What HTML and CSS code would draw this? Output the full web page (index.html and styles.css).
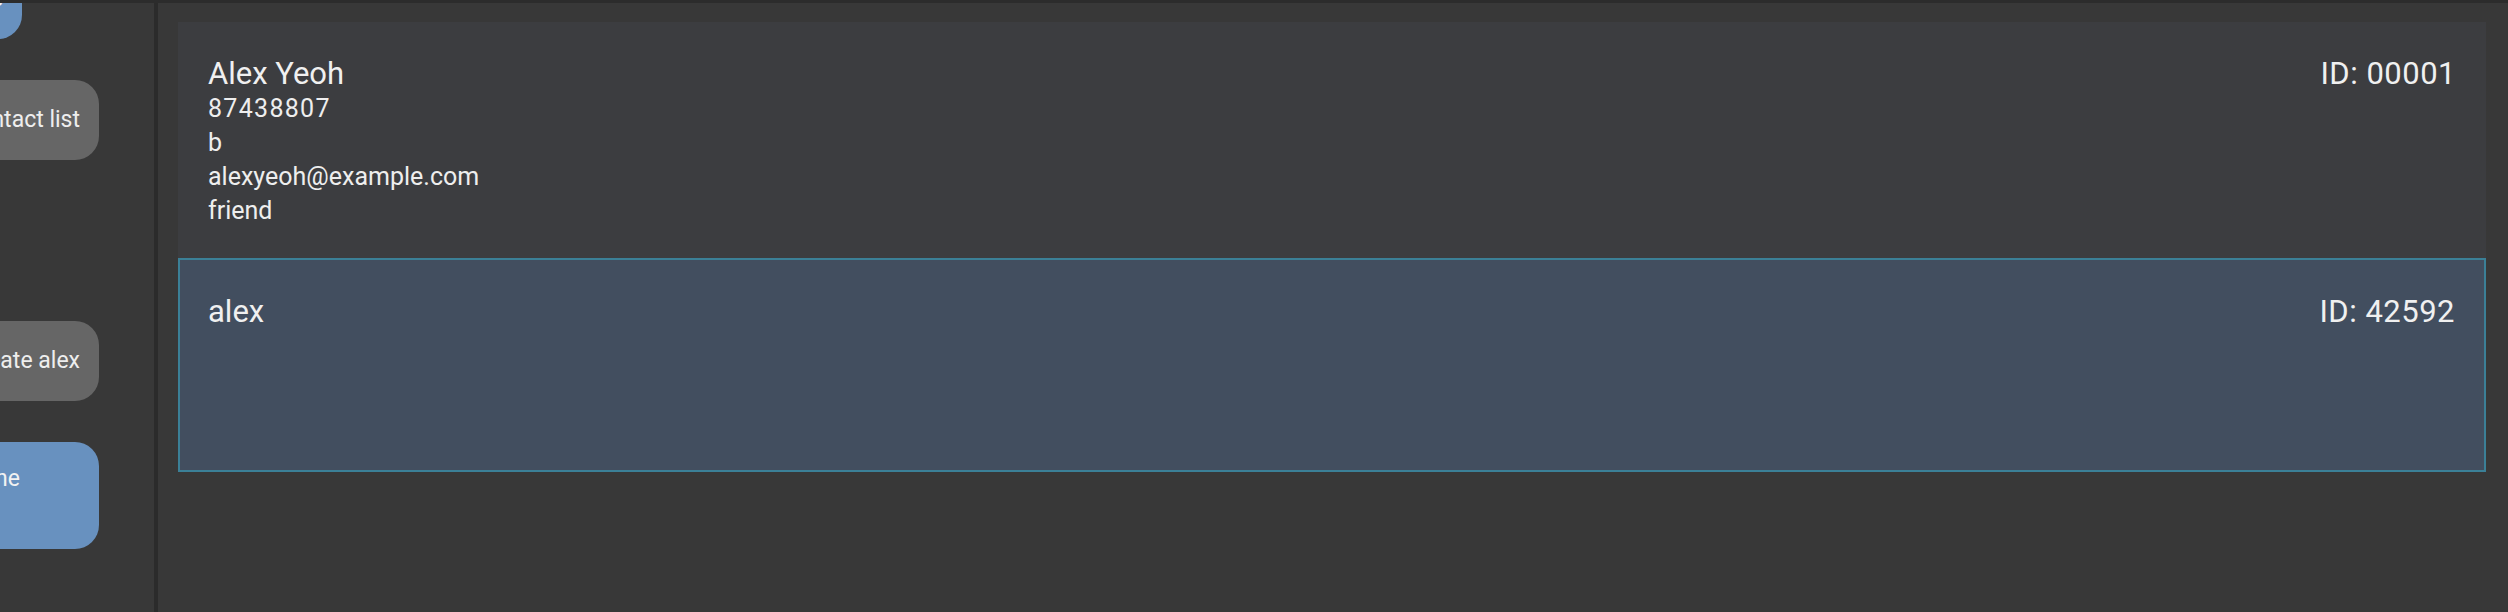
FILE: index.html
```html
<!DOCTYPE html>
<html lang="en">
<head>
<meta charset="utf-8">
<title>Contacts</title>
<link rel="stylesheet" href="styles.css">
</head>
<body>
<div class="topbar"></div>
<div class="main">
  <aside class="chat">
    <div class="bubble bot bubble-top">Here is your updated list of contacts</div>
    <div class="bubble user">Show my contact list</div>
    <div class="bubble bot bubble-hidden">Here you go</div>
    <div class="bubble user">Create alex</div>
    <div class="bubble bot bubble-multi">Contact alex was added, all done<br>OK</div>
  </aside>
  <div class="divider"></div>
  <section class="list">
    <article class="card">
      <div class="card-head">
        <div class="name">Alex Yeoh</div>
        <div class="id">ID: 00001</div>
      </div>
      <div class="detail phone">87438807</div>
      <div class="detail">b</div>
      <div class="detail">alexyeoh@example.com</div>
      <div class="detail">friend</div>
    </article>
    <article class="card card-selected">
      <div class="card-head">
        <div class="name">alex</div>
        <div class="id">ID: 42592</div>
      </div>
    </article>
  </section>
</div>
</body>
</html>
```

FILE: styles.css
```css
* {
  box-sizing: border-box;
}

html, body {
  margin: 0;
  padding: 0;
  width: 2508px;
  height: 612px;
  overflow: hidden;
  background: #383838;
  font-family: Roboto, "Liberation Sans", sans-serif;
  color: #eeeeee;
}

.topbar {
  height: 3px;
  background: #2c2c2c;
}

.main {
  display: flex;
  height: 609px;
}

.chat {
  width: 154px;
  flex: none;
  overflow: hidden;
  display: flex;
  flex-direction: column;
  align-items: flex-end;
  padding-right: 55px;
  gap: 41px;
}

.bubble {
  white-space: nowrap;
  font-size: 23px;
  line-height: 30px;
  padding: 25px 19px 25px 22px;
  border-radius: 24px;
  flex: none;
}

.bubble.user {
  background: #666666;
  color: #eeeeee;
  height: 80px;
}

.bubble.bot {
  background: #6891bf;
  color: #f2f2f2;
}

.bubble-top {
  height: 80px;
  margin-top: -44px;
  margin-right: 77px;
}

.bubble-hidden {
  height: 79px;
  margin-right: 200px;
}

.bubble-multi {
  height: 107px;
  padding: 22px 79px 22px 22px;
}

.divider {
  width: 4px;
  flex: none;
  background: #2b2b2b;
}

.list {
  flex: 1;
  padding: 19px 22px 0 20px;
  display: flex;
  flex-direction: column;
}

.card {
  background: #3c3d40;
  padding: 33px 30px 30px 30px;
  height: 236px;
}

.card-selected {
  background: #424e5f;
  border: 2px solid #3b8097;
  padding: 33px 29px 0 28px;
  height: 214px;
}

.card-head {
  display: flex;
  justify-content: space-between;
  align-items: baseline;
}

.name, .id {
  font-size: 31px;
  line-height: 37px;
  color: #f0f0f0;
}

.id {
  letter-spacing: 0.5px;
}

.detail {
  font-size: 25px;
  line-height: 34px;
  color: #eeeeee;
}

.phone {
  letter-spacing: 1.3px;
}
```
